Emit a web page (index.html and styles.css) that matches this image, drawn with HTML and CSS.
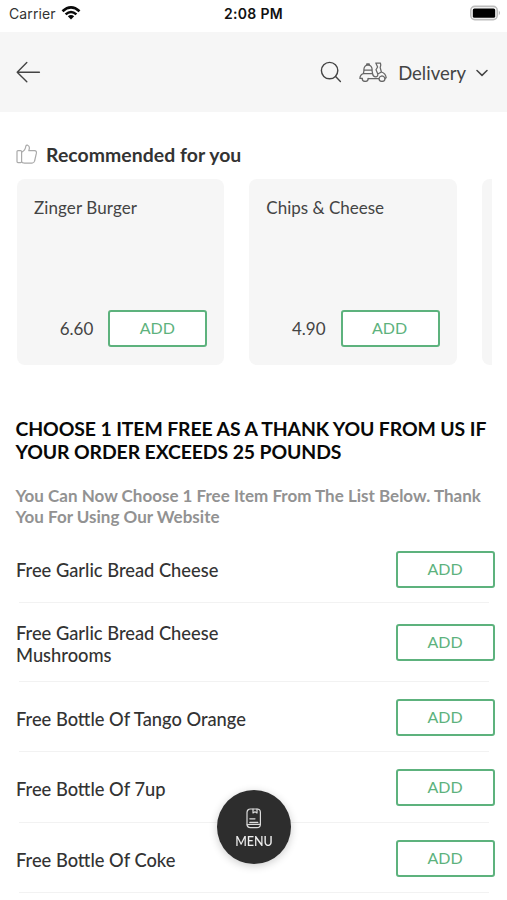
FILE: index.html
```html
<!DOCTYPE html>
<html lang="en">
<head>
<meta charset="utf-8">
<title>Menu</title>
<link rel="stylesheet" href="styles.css">
</head>
<body>
<div class="status">
  <div class="carrier"><span>Carrier</span>
    <svg width="20" height="16" viewBox="0 0 20 16" fill="none" stroke="#0a0a0a" stroke-width="2.6"><path d="M1.5 6.2Q10 -1.6 18.5 6.2M4.6 9.4Q10 4.6 15.4 9.4"/><path d="M10 14.4L6.8 11.3Q10 8.8 13.2 11.3Z" fill="#0a0a0a" stroke="none"/></svg>
  </div>
  <div class="clock">2:08 PM</div>
  <svg class="battery" width="31" height="16" viewBox="0 0 31 16"><rect x=".8" y="1.4" width="26.4" height="13.2" rx="4" fill="#fff" stroke="#bdbdbd" stroke-width="1.6"/><rect x="2.8" y="3.4" width="22.4" height="9.4" rx="1.6" fill="#000"/><path d="M28.8 5.6Q31 8 28.8 10.4Z" fill="#aaa"/></svg>
</div>
<header class="bar">
  <svg class="back" width="26" height="24" viewBox="0 0 26 24" fill="none" stroke="#444" stroke-width="1.4" stroke-linecap="round" stroke-linejoin="round"><path d="M23.4 12.3H1.2M10.8 2.6L1.2 12.3L10.8 21.8"/></svg>
  <div class="tools">
    <svg class="search" width="22" height="22" viewBox="0 0 22 22" fill="none" stroke="#444" stroke-width="1.4" stroke-linecap="round"><circle cx="9.6" cy="9.6" r="8.2"/><path d="M15.6 15.6L20.4 20.4"/></svg>
    <svg class="moped" width="28" height="20" viewBox="0 0 28 20" fill="none" stroke="#666" stroke-width="1.25" stroke-linecap="round" stroke-linejoin="round"><path d="M4.8 8.2C5 1.4 13 1.4 13.2 8.2ZM7.8 3V1.8H10.2V3M5 8.4L4.4 11.6H13.6L13 8.4M4.4 11.6Q1 12.6 .9 16.4H3.2M9.2 16.6H19.8M13.6 11.6Q14 15 17 14.8Q19.4 14.2 18.6 11.4L17 7.8L18.6 5L16.8 1H21.4Q22.4 3.4 21.2 5.6L22.4 10Q26.8 11.4 27.2 15.8L26 16.4M18.8 12L22.4 10"/><path d="M3.2 16.4A3 3 0 0 0 9.2 16.4M20 16.4A3 3 0 0 0 26 16.4Q25 13.8 23 13.8Q20.6 14 20 16.4"/></svg>
    <span class="mode">Delivery</span>
    <svg class="chev" width="12" height="8" viewBox="0 0 12 8" fill="none" stroke="#444" stroke-width="1.5" stroke-linecap="round" stroke-linejoin="round"><path d="M1 1.5L6 6.4L11 1.5"/></svg>
  </div>
</header>
<main>
  <h2 class="rec"><svg width="22" height="21" viewBox="0 0 22 21" fill="none" stroke="#aaa" stroke-width="1.2" stroke-linejoin="round"><rect x="1" y="6.6" width="4.6" height="12" rx="1"/><path d="M5.6 8.2Q9.4 6.4 9.8 2.2Q10.2 .9 11.6 1.2Q14.4 2.2 12.8 6.6H18.6Q20.8 6.8 20.4 9.2L18.6 17Q18.2 19 16 19.1H8.6Q6 19 5.6 17.8"/></svg><span>Recommended for you</span></h2>
  <div class="cards">
    <article class="card"><h3>Zinger Burger</h3><div class="buy"><span>6.60</span><button class="add">ADD</button></div></article>
    <article class="card"><h3>Chips &amp; Cheese</h3><div class="buy"><span>4.90</span><button class="add">ADD</button></div></article>
    <article class="card"></article>
  </div>
  <h1>CHOOSE 1 ITEM FREE AS A THANK YOU FROM US IF<br>YOUR ORDER EXCEEDS 25 POUNDS</h1>
  <p class="note">You Can Now Choose 1 Free Item From The List Below. Thank<br>You For Using Our Website</p>
  <ul class="list">
    <li><span>Free Garlic Bread Cheese</span><button class="add">ADD</button></li>
    <li class="tall"><span>Free Garlic Bread Cheese<br>Mushrooms</span><button class="add">ADD</button></li>
    <li><span>Free Bottle Of Tango Orange</span><button class="add">ADD</button></li>
    <li><span>Free Bottle Of 7up</span><button class="add">ADD</button></li>
    <li><span>Free Bottle Of Coke</span><button class="add">ADD</button></li>
  </ul>
</main>
<button class="menu">
  <svg width="16" height="21" viewBox="0 0 16 21" fill="none" stroke="#ddd" stroke-width="1.2" stroke-linecap="round" stroke-linejoin="round"><rect x="1" y="1" width="13.4" height="18.6" rx="3.4"/><path d="M7 1.2V5L9 3.8L11 5V1.2M3.8 10.8H9M3.8 14.4H11.8M1.2 16.8Q2 16.4 3.8 16.4H14"/></svg>
  <span>MENU</span>
</button>
</body>
</html>
```
FILE: styles.css
```css
* { box-sizing: border-box; }
body { margin: 0; height: 900px; overflow: hidden; background: #fff; color: #333; font-family: Lato, "Liberation Sans", sans-serif; }
h1, h2, h3, p, ul { margin: 0; padding: 0; }
svg { display: block; flex: none; }
.status { height: 32px; display: grid; grid-template-columns: 1fr auto 1fr; align-items: start; padding: 5px 6px 0 9px; font-family: Inter, sans-serif; }
.carrier { display: flex; gap: 5px; font-size: 14px; line-height: 18px; letter-spacing: .1px; color: #333; }
.clock { font-size: 14px; line-height: 18px; font-weight: 600; letter-spacing: .3px; margin-left: -3px; color: #111; }
.battery { justify-self: end; }
.bar { height: 80px; background: #f6f6f6; display: flex; align-items: center; justify-content: space-between; padding: 0 19px 0 16px; }
.tools { display: flex; align-items: center; }
.moped { margin: 0 11px 0 17px; }
.mode { font-size: 18.5px; line-height: 24px; margin: 2px 10px 0 0; color: #444; }
.chev { margin-top: 2px; }
main { padding: 0 15px; }
.rec { display: flex; align-items: center; gap: 8px; height: 24px; margin-top: 30px; font-size: 19.4px; font-weight: 700; letter-spacing: .06px; color: #333; padding-left: 1px; }
.cards { display: flex; gap: 25px; margin: 13px 0 0 2px; overflow: hidden; }
.card { flex: 0 0 207.3px; height: 186px; border-radius: 8px; background: #f6f6f6; padding: 18px 17px; display: flex; flex-direction: column; justify-content: space-between; }
.card h3 { font-size: 17px; line-height: 22px; font-weight: 400; letter-spacing: .1px; color: #444; }
.card + .card h3 { letter-spacing: 0; }
.buy { display: flex; align-items: center; justify-content: flex-end; gap: 15px; font-size: 17px; color: #444; }
.add { flex: none; width: 99px; height: 37px; border: 2px solid #5db27d; border-radius: 3px; background: #fff; color: #5db27d; font: 400 16px/32px Lato, sans-serif; padding: 0 1px 1px 0; }
h1 { margin-top: 51.5px; font-size: 19.4px; line-height: 23.5px; font-weight: 700; letter-spacing: -.1px; color: #080808; white-space: nowrap; }
.note { margin-top: 22.5px; font-size: 17px; line-height: 20.5px; font-weight: 700; color: #929292; white-space: nowrap; }
.list { list-style: none; margin-top: 5.5px; }
.list li { display: flex; align-items: center; justify-content: space-between; height: 70.5px; padding-top: 3px; margin-right: -3px; font-size: 18.3px; line-height: 22px; font-weight: 500; background: linear-gradient(#f2f2f2, #f2f2f2) 4px 100% / calc(100% - 10px) 1px no-repeat; }
.list .tall { height: 78.5px; }
.list li:nth-child(n+2) { padding-top: 1.4px; }
.list span { margin: 1px 0 0 1px; }
.list li:nth-child(n+2) span { margin-top: 3px; }
h1, .note { padding-left: .5px; }
.menu { position: fixed; left: 217px; top: 790px; width: 74px; height: 74px; border: 0; border-radius: 50%; background: #2d2d2d; color: #eee; display: flex; flex-direction: column; align-items: center; gap: 5px; padding: 18px 0 0; font: 500 12.5px/16px Lato, sans-serif; box-shadow: 0 2px 8px #0003; }
```
